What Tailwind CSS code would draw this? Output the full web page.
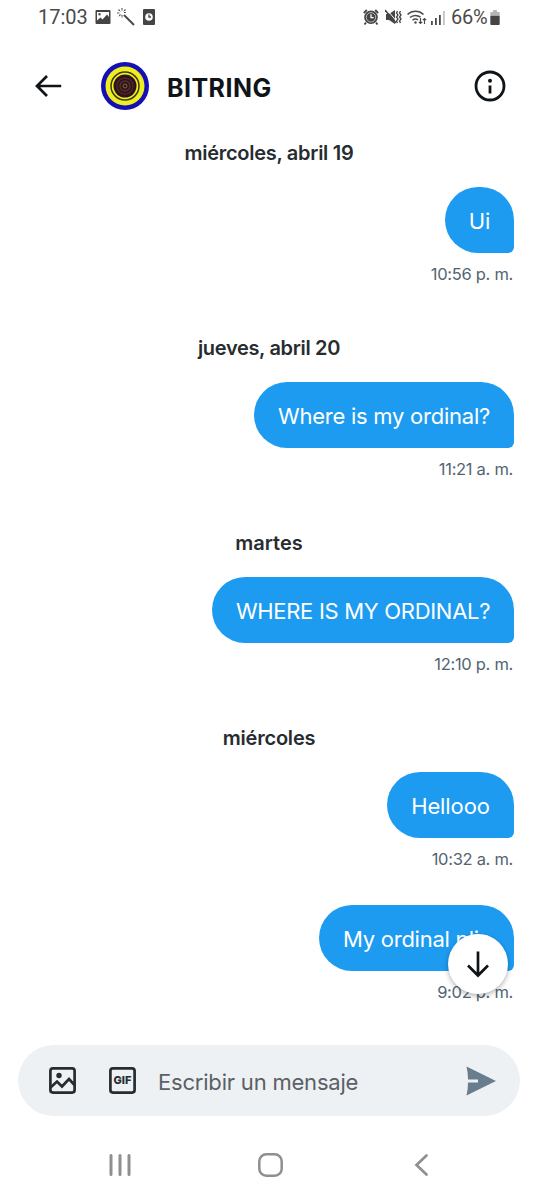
<!DOCTYPE html>
<html lang="es">
<head>
  <meta charset="UTF-8">
  <meta name="viewport" content="width=device-width, initial-scale=1.0">
  <title>BITRING</title>
  <script src="https://cdn.jsdelivr.net/npm/@tailwindcss/browser@4"></script>
</head>
<body class="bg-white font-['Inter','Liberation_Sans',sans-serif]">
<div class="w-[538px] h-[1200px] flex flex-col overflow-hidden">

  <!-- Status bar -->
  <div class="h-[34px] shrink-0 flex items-center pl-[38px] pr-[38px] text-[#4a4a4a] font-[Roboto,sans-serif] text-[20px]">
    <span class="w-[50px] whitespace-nowrap">17:03</span>
    <svg class="ml-[7px] w-4 h-4" viewBox="0 0 16 16">
      <path fill="#454545" fill-rule="evenodd" d="M1.500 1h13a1 1 0 0 1 1 1v12a1 1 0 0 1-1 1h-13a1 1 0 0 1-1-1V2a1 1 0 0 1 1-1zM2 11.500l3.500-3 2 2L12 5.500l2 2.500V3H2zM4.500 4a1.200 1.200 0 1 1 0 2.400 1.200 1.200 0 0 1 0-2.400z"/>
    </svg>
    <svg class="ml-[6px] w-[18px] h-[18px]" viewBox="0 0 18 18" fill="none" stroke="#4a4a4a">
      <path stroke-width="1.900" d="M7 7l10 10"/>
      <path stroke-width="1.100" stroke-dasharray="1.800 .8" d="M5 0v3M5 7v3M0 5h3M7 4.500h2.500M1.500 1.500l2 2M8.500 1.500l-2 2M3.500 6.500l-2 2"/>
    </svg>
    <svg class="ml-[8px] w-[12px] h-4" viewBox="0 0 12 16">
      <rect width="12" height="16" rx="1" fill="#454545"/>
      <circle cx="6" cy="8" r="3.800" fill="#fff"/>
      <path d="M6 5.500V8h2" fill="none" stroke="#454545" stroke-width="1.300"/>
    </svg>
    <svg class="ml-auto w-4 h-4" viewBox="0 0 16 16">
      <circle cx="8" cy="8.300" r="6.800" fill="#454545"/>
      <path d="M.8 4l3-3M15.200 4l-3-3M3 13.500l-1.500 2M13 13.500l1.500 2" stroke="#454545" stroke-width="1.800"/>
      <circle cx="8" cy="8.300" r="4.700" fill="none" stroke="#fff" stroke-width=".6"/>
      <path d="M8 5.300v3.400h2.700" fill="none" stroke="#fff" stroke-width="1.300"/>
    </svg>
    <svg class="ml-[6px] w-[17px] h-4" viewBox="0 0 17 16">
      <path fill="#454545" d="M1 5h3l6-4v14L4 11H1z"/>
      <path fill="none" stroke="#fff" stroke-width="1" d="M1.500 0l11 13.500"/>
      <path fill="none" stroke="#454545" stroke-width="1.500" d="M0 1l11 13"/>
      <path fill="none" stroke="#454545" stroke-width="1.300" d="M12.500 2l-1 2 1.500 2-1.500 2 1.500 2-1.500 2 1 2M15.500 2l-1 2 1.500 2-1.500 2 1.500 2-1.500 2 1 2"/>
    </svg>
    <svg class="ml-[5px] w-[20px] h-4" viewBox="0 0 20 16" fill="none" stroke="#4a4a4a" stroke-width="1.500">
      <path d="M.5 5.500a11.500 11.500 0 0 1 16 0M3 8.500a8 8 0 0 1 10.500-.3M5.500 11.200a4.500 4.500 0 0 1 5.500-.4"/>
      <circle cx="8.500" cy="13.500" r="1.200" fill="#4a4a4a" stroke="none"/>
      <path stroke-width="1.200" d="M13.500 9v5.500M11.800 12.800l1.700 1.700 1.700-1.700M17.500 15V9.500M15.800 11.200l1.700-1.700 1.700 1.700"/>
    </svg>
    <svg class="ml-[4px] w-[14px] h-[15px]" viewBox="0 0 14 15">
      <path fill="#4a4a4a" d="M0 11h1.800v4H0zM4 8h1.800v7H4zM8 5h1.800v10H8z"/>
      <path fill="#c4c4c4" d="M12 1h1.800v14H12z"/>
    </svg>
    <span class="ml-[6px] w-[37px] whitespace-nowrap tracking-[-0.3px]">66%</span>
    <svg class="ml-[2px] w-[10px] h-[15px]" viewBox="0 0 10 16">
      <path fill="#b5b5b5" d="M3 0h4v2h3v4H0V2h3z"/>
      <path fill="#454545" d="M0 6h10v9a1 1 0 0 1-1 1H1a1 1 0 0 1-1-1z"/>
    </svg>
  </div>

  <!-- Header -->
  <header class="h-[105px] shrink-0 flex items-center pl-[35px] pr-8 pb-[1px] text-[#0f1419]">
    <svg class="w-[27px] h-[24px]" viewBox="0 0 27 24" fill="none" stroke="currentColor" stroke-width="2.700">
      <path d="M26.200 12H2.500M12 2L2 12l10 10"/>
    </svg>
    <svg class="ml-[38px] w-[50px] h-[50px]" viewBox="0 0 50 50" fill="none">
      <circle cx="25" cy="25" r="24" fill="#1410b4"/>
      <circle cx="25" cy="25" r="19.500" fill="#eeee22"/>
      <circle cx="25" cy="25" r="14" stroke="#3c3812" stroke-width="1.500"/>
      <circle cx="25" cy="25" r="11.500" fill="#2c1518"/>
      <circle cx="25" cy="25" r="8" stroke="#57202c" stroke-width="1.500"/>
      <circle cx="25" cy="25" r="5" stroke="#4c3330" stroke-width="1.500"/>
      <circle cx="25" cy="25" r="2" stroke="#95603a"/>
    </svg>
    <h1 class="ml-[17px] pt-[5px] text-[25px] font-bold whitespace-nowrap tracking-[0.45px]">BITRING</h1>
    <svg class="ml-auto w-8 h-8" viewBox="0 0 32 32">
      <circle cx="16" cy="16" r="14" fill="none" stroke="currentColor" stroke-width="2.800"/>
      <circle cx="16" cy="10.700" r="2" fill="currentColor"/>
      <path fill="currentColor" d="M14.600 15.500h2.800v8h-2.800z"/>
    </svg>
  </header>

  <!-- Messages -->
  <main class="h-[906px] shrink-0 relative flex flex-col gap-[47px] pr-6">
    <section class="flex flex-col items-end h-[148px]">
      <h2 class="w-[538px] -mr-6 h-7 leading-7 text-center text-[20px] tracking-[-0.28px] font-semibold text-[#272c30]">miércoles, abril 19</h2>
      <div class="mt-5 h-[66px] w-[69px] rounded-[33px] rounded-br-[6px] bg-[#1d9bf0] text-white text-[22px] pt-[3px] flex items-center justify-center whitespace-nowrap">Ui</div>
      <time class="mt-2 mr-px h-[26px] leading-[26px] text-[16.500px] tracking-[-0.3px] text-[#536471]">10:56 p. m.</time>
    </section>
    <section class="flex flex-col items-end h-[148px]">
      <h2 class="w-[538px] -mr-6 h-7 leading-7 text-center text-[20px] tracking-[-0.33px] font-semibold text-[#272c30]">jueves, abril 20</h2>
      <div class="mt-5 h-[66px] w-[260px] rounded-[33px] rounded-br-[6px] bg-[#1d9bf0] text-white text-[22px] tracking-[-0.25px] pt-[3px] flex items-center justify-center whitespace-nowrap">Where is my ordinal?</div>
      <time class="mt-2 mr-px h-[26px] leading-[26px] text-[16.500px] tracking-[-0.3px] text-[#536471]">11:21 a. m.</time>
    </section>
    <section class="flex flex-col items-end h-[148px]">
      <h2 class="w-[538px] -mr-6 h-7 leading-7 text-center text-[20px] font-semibold text-[#272c30]">martes</h2>
      <div class="mt-5 h-[66px] w-[302px] rounded-[33px] rounded-br-[6px] bg-[#1d9bf0] text-white text-[22px] tracking-[-0.3px] pt-[3px] flex items-center justify-center whitespace-nowrap">WHERE IS MY ORDINAL?</div>
      <time class="mt-2 mr-px h-[26px] leading-[26px] text-[16.500px] tracking-[-0.3px] text-[#536471]">12:10 p. m.</time>
    </section>
    <section class="flex flex-col items-end">
      <h2 class="w-[538px] -mr-6 h-7 leading-7 text-center text-[20px] tracking-[-0.2px] font-semibold text-[#272c30]">miércoles</h2>
      <div class="mt-5 h-[66px] w-[127px] rounded-[33px] rounded-br-[6px] bg-[#1d9bf0] text-white text-[22px] tracking-[-0.1px] pt-[3px] flex items-center justify-center whitespace-nowrap">Hellooo</div>
      <time class="mt-2 mr-px h-[26px] leading-[26px] text-[16.500px] tracking-[-0.3px] text-[#536471]">10:32 a. m.</time>
      <div class="mt-[33px] h-[66px] w-[195px] rounded-[33px] rounded-br-[6px] bg-[#1d9bf0] text-white text-[22px] tracking-[-0.25px] pl-6 pt-[3px] flex items-center whitespace-nowrap">My ordinal plis</div>
      <time class="mt-2 mr-px h-[26px] leading-[26px] text-[16.500px] tracking-[-0.3px] text-[#536471]">9:02 p. m.</time>
    </section>

    <!-- Scroll to bottom -->
    <button class="absolute right-[30px] top-[795px] w-[60px] h-[60px] rounded-full bg-white shadow-[0_2px_5px_rgba(0,0,0,0.3)] flex items-center justify-center text-[#0f1419]">
      <svg class="w-6 h-[27px]" viewBox="0 0 24 27" fill="none" stroke="currentColor" stroke-width="2.700">
        <path d="M12 .5v24M2 14.500l10 10 10-10"/>
      </svg>
    </button>
  </main>

  <!-- Composer -->
  <div class="mx-[18px] h-[71px] shrink-0 rounded-full bg-[#eef1f4] flex items-center pl-[31px] pr-[24px] text-[#272c30]">
    <svg class="w-[27px] h-[27px]" viewBox="0 0 27 27" fill="none" stroke="currentColor" stroke-width="2.700">
      <rect x="1.400" y="1.400" width="24.200" height="24.200" rx="2.500"/>
      <path d="M1.500 20.500l6.500-6 5 5 7-7.500 5.500 6"/>
      <circle cx="10" cy="8.500" r="2.700" fill="currentColor" stroke="none"/>
    </svg>
    <div class="relative ml-[33px] w-[27px] h-[27px] flex items-center justify-center">
      <svg class="absolute inset-0 w-[27px] h-[27px]" viewBox="0 0 27 27" fill="none" stroke="currentColor" stroke-width="2.700">
        <rect x="1.400" y="1.400" width="24.200" height="24.200" rx="2.500"/>
      </svg>
      <span class="text-[11px] leading-none font-extrabold whitespace-nowrap">GIF</span>
    </div>
    <span class="ml-[22px] pt-[3px] text-[22px] tracking-[-0.2px] text-[#5b6064] whitespace-nowrap">Escribir un mensaje</span>
    <svg class="ml-auto w-[30px] h-[30px]" viewBox="0 0 30 30">
      <path fill="#687d8d" d="M.5.5L30 15 .5 29.500Q2 23 2 16.500h10v-3H2Q2 7 .5.500z"/>
    </svg>
  </div>

  <!-- Navigation bar -->
  <nav class="h-[84px] shrink-0 flex items-center pl-[109px] pt-[14px] text-[#8f8f8f]">
    <svg class="w-[22px] h-[24px]" viewBox="0 0 22 24" stroke="currentColor" stroke-width="3" stroke-linecap="round">
      <path d="M2 2.500v19M11 2.500v19M20 2.500v19"/>
    </svg>
    <svg class="ml-[127px] w-[25px] h-[24px]" viewBox="0 0 25 24" fill="none" stroke="currentColor" stroke-width="2.500">
      <rect x="1.300" y="1.300" width="22.400" height="21.400" rx="7"/>
    </svg>
    <svg class="ml-[131px] w-[15px] h-[24px]" viewBox="0 0 15 24" fill="none" stroke="currentColor" stroke-width="2.700" stroke-linecap="round">
      <path d="M12.500 2.500L2.500 12l10 9.500"/>
    </svg>
  </nav>
</div>
</body>
</html>
